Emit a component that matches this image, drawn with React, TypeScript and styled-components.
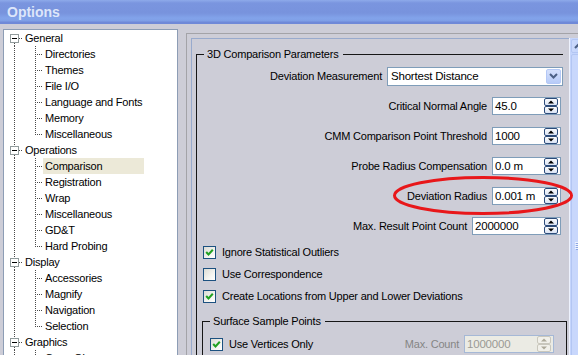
import styled, { createGlobalStyle } from "styled-components";

const GlobalStyle = createGlobalStyle`
  html, body {
    margin: 0;
    padding: 0;
  }
  body {
    background: #cdcdd7;
    font-family: "Liberation Sans", Arial, sans-serif;
    font-size: 11px;
    letter-spacing: -0.2px;
    color: #000;
  }
`;

type TreeGroup = { title: string; items: string[] };

const tree: TreeGroup[] = [
  {
    title: "General",
    items: ["Directories", "Themes", "File I/O", "Language and Fonts", "Memory", "Miscellaneous"],
  },
  {
    title: "Operations",
    items: ["Comparison", "Registration", "Wrap", "Miscellaneous", "GD&T", "Hard Probing"],
  },
  { title: "Display", items: ["Accessories", "Magnify", "Navigation", "Selection"] },
  { title: "Graphics", items: ["Open GL"] },
];

const spinRows = [
  { label: "Critical Normal Angle", value: "45.0", width: 69 },
  { label: "CMM Comparison Point Threshold", value: "1000", width: 69 },
  { label: "Probe Radius Compensation", value: "0.0 m", width: 69 },
  { label: "Deviation Radius", value: "0.001 m", width: 69 },
  { label: "Max. Result Point Count", value: "2000000", width: 89 },
];

const checks = [
  { label: "Ignore Statistical Outliers", checked: true },
  { label: "Use Correspondence", checked: false },
  { label: "Create Locations from Upper and Lower Deviations", checked: true },
];

const DOT = "#4a4a4a";

const ParentGuide = ({ first }: { first?: boolean }) => (
  <svg width={19} height={16} shapeRendering="crispEdges">
    <g stroke={DOT} strokeDasharray="1 1">
      {!first && <line x1={10.5} y1={0} x2={10.5} y2={4} />}
      <line x1={10.5} y1={13} x2={10.5} y2={16} />
      <line x1={15} y1={8.5} x2={19} y2={8.5} />
    </g>
    <rect x={6.5} y={4.5} width={8} height={8} fill="#fff" stroke="#919b9c" />
    <line x1={8} y1={8.5} x2={13} y2={8.5} stroke="#000" />
  </svg>
);

const ChildGuide = ({ last }: { last?: boolean }) => (
  <svg width={39} height={16} shapeRendering="crispEdges">
    <g stroke={DOT} strokeDasharray="1 1">
      <line x1={10.5} y1={0} x2={10.5} y2={16} />
      <line x1={31.5} y1={0} x2={31.5} y2={last ? 9 : 16} />
      <line x1={33} y1={8.5} x2={39} y2={8.5} />
    </g>
  </svg>
);

const SpinArrows = ({ disabled }: { disabled?: boolean }) => {
  const edge = disabled ? "#c9c7bd" : "#2c4b7a";
  const arrow = disabled ? "#aca899" : "#000";
  const fill = disabled ? "#f1f0ea" : "url(#spinFill)";
  return (
    <svg width={15} height={16}>
      <defs>
        <linearGradient id="spinFill" x1="0" y1="0" x2="0" y2="1">
          <stop offset="0" stopColor="#ffffff" />
          <stop offset="1" stopColor="#d8e2f4" />
        </linearGradient>
      </defs>
      <rect x={0.5} y={0.5} width={13} height={7} rx={1.5} fill={fill} stroke={edge} />
      <rect x={0.5} y={8.5} width={13} height={7} rx={1.5} fill={fill} stroke={edge} />
      <polygon points="4,5.5 10,5.5 7,2.5" fill={arrow} />
      <polygon points="4,10.5 10,10.5 7,13.5" fill={arrow} />
    </svg>
  );
};

const Chevron = () => (
  <svg width={9} height={6}>
    <polyline points="1,1 4.5,4.5 8,1" fill="none" stroke="#4d6185" strokeWidth={2} />
  </svg>
);

const CheckMark = () => (
  <svg width={9} height={9}>
    <polyline points="1.2,4 3.5,6.5 7.8,1.8" fill="none" stroke="#21a121" strokeWidth={2} />
  </svg>
);

const Grip = () => (
  <svg width={8} height={8} shapeRendering="crispEdges">
    {[0, 2, 4, 6].map((y) => (
      <g key={y}>
        <line x1={0} y1={y + 0.5} x2={7} y2={y + 0.5} stroke="#eef3fe" />
        <line x1={1} y1={y + 1.5} x2={8} y2={y + 1.5} stroke="#8ca6e4" />
      </g>
    ))}
  </svg>
);

const Check = ({ checked, label }: { checked: boolean; label: string }) => (
  <CheckRow>
    <CheckBox>{checked && <CheckMark />}</CheckBox>
    <span>{label}</span>
  </CheckRow>
);

const SpinField = ({
  value,
  width,
  disabled,
  $gapRight = 2,
}: {
  value: string;
  width: number;
  disabled?: boolean;
  $gapRight?: number;
}) => (
  <Spin $width={width} $disabled={disabled} $gapRight={$gapRight}>
    <SpinText $disabled={disabled}>{value}</SpinText>
    <SpinArrows disabled={disabled} />
  </Spin>
);

export default function App() {
  return (
    <Window>
      <GlobalStyle />
      <TitleBar>Options</TitleBar>
      <Body>
        <Tree>
          {tree.map((group, gi) => (
            <div key={group.title}>
              <TreeRow>
                <ParentGuide first={gi === 0} />
                <NodeLabel>{group.title}</NodeLabel>
              </TreeRow>
              {group.items.map((item, i) => (
                <TreeRow key={item + i}>
                  <ChildGuide last={i === group.items.length - 1} />
                  <NodeLabel $selected={item === "Comparison"}>{item}</NodeLabel>
                </TreeRow>
              ))}
            </div>
          ))}
        </Tree>

        <Frame>
          <PaneContent>
            <Group>
              <Legend $inset={2}>3D Comparison Parameters</Legend>
              <FieldRow>
                <span>Deviation Measurement</span>
                <Combo>
                  <ComboText>Shortest Distance</ComboText>
                  <DropButton>
                    <Chevron />
                  </DropButton>
                </Combo>
              </FieldRow>
              {spinRows.map((row) => (
                <FieldRow key={row.label}>
                  <span>{row.label}</span>
                  <SpinField value={row.value} width={row.width} />
                </FieldRow>
              ))}
              {checks.map((c) => (
                <Check key={c.label} checked={c.checked} label={c.label} />
              ))}
              <Group $inner>
                <Legend $inset={1}>Surface Sample Points</Legend>
                <InnerRow>
                  <Check checked label="Use Vertices Only" />
                  <MutedLabel>Max. Count</MutedLabel>
                  <SpinField value="1000000" width={90} disabled $gapRight={0} />
                </InnerRow>
              </Group>
            </Group>
          </PaneContent>
          <ScrollBar>
            <ScrollButton>
              <svg width={9} height={6}>
                <polyline points="1,5 4.5,1.5 8,5" fill="none" stroke="#4d6185" strokeWidth={2} />
              </svg>
            </ScrollButton>
            <Thumb>
              <Grip />
            </Thumb>
          </ScrollBar>
        </Frame>
      </Body>

      <Highlight width={183} height={42}>
        <ellipse cx={91} cy={20.5} rx={88.5} ry={18} fill="none" stroke="#e8171a" strokeWidth={3} />
      </Highlight>
    </Window>
  );
}

const Window = styled.div`
  position: relative;
  width: 578px;
  height: 355px;
  overflow: hidden;
  background: #cdcdd7;
  display: flex;
  flex-direction: column;
`;

const TitleBar = styled.div`
  flex: none;
  height: 24px;
  line-height: 24px;
  padding-left: 7px;
  font-size: 14px;
  font-weight: bold;
  letter-spacing: 0;
  color: #dde6fa;
  background: linear-gradient(
    to bottom,
    #8eaaea 0px,
    #7a95df 3px,
    #7893dd 13px,
    #82a3ea 18px,
    #7f9fe6 21px,
    #6f89d8 22px,
    #6f89d8 24px
  );
`;

const Body = styled.div`
  flex: 1;
  display: flex;
  align-items: flex-start;
  padding: 5px 0 0 3px;
  min-height: 0;
`;

const Tree = styled.div`
  flex: none;
  width: 175px;
  height: 400px;
  box-sizing: border-box;
  background: #fff;
  border: 1px solid #8d9db5;
`;

const TreeRow = styled.div`
  display: flex;
  align-items: center;
  height: 16px;

  svg {
    flex: none;
    display: block;
  }
`;

const NodeLabel = styled.span<{ $selected?: boolean }>`
  box-sizing: border-box;
  height: 16px;
  line-height: 16px;
  padding: 0 2px;
  white-space: nowrap;
  background: ${(p) => (p.$selected ? "#ece9d8" : "transparent")};
  width: ${(p) => (p.$selected ? "101px" : "auto")};
`;

const Frame = styled.div`
  flex: none;
  display: flex;
  margin: 4px 0 0 8px;
  padding: 4px 0 0 4px;
  height: 400px;
  border-left: 1px solid #a3a3a8;
  border-top: 1px solid #a3a3a8;
`;

const PaneContent = styled.div`
  flex: none;
  width: 378px;
  box-sizing: border-box;
  padding: 0 6px 0 4px;
  border-left: 1px solid #98aacd;
  border-top: 1px solid #98aacd;
`;

const Group = styled.fieldset<{ $inner?: boolean }>`
  min-width: 0;
  margin: ${(p) => (p.$inner ? "8px -4px 0 0" : "9px 0 0 0")};
  padding: ${(p) => (p.$inner ? "0 12px 0 6px" : "0 0 0 5px")};
  border: 1px solid #161616;
  border-bottom: none;
  border-right: ${(p) => (p.$inner ? "1px solid #161616" : "none")};
`;

const Legend = styled.legend<{ $inset: number }>`
  margin-left: ${(p) => p.$inset}px;
  padding: 0 4px 0 3px;
  line-height: 13px;
`;

const FieldRow = styled.div`
  height: 30px;
  display: flex;
  align-items: center;
  justify-content: flex-end;
  gap: 5px;
  white-space: nowrap;
`;

const Combo = styled.div`
  width: 176px;
  height: 19px;
  box-sizing: border-box;
  display: flex;
  align-items: center;
  padding: 0 1px 0 3px;
  background: #fff;
  border: 1px solid #7f9db9;
`;

const ComboText = styled.span`
  flex: 1;
  font-size: 11.5px;
`;

const DropButton = styled.span`
  width: 15px;
  height: 15px;
  box-sizing: border-box;
  display: flex;
  align-items: center;
  justify-content: center;
  border: 1px solid #b4c8f6;
  border-radius: 2px;
  background: linear-gradient(#d6e1fc, #b7cbf8);
`;

const Spin = styled.div<{ $width: number; $disabled?: boolean; $gapRight: number }>`
  width: ${(p) => p.$width}px;
  height: 18px;
  box-sizing: border-box;
  display: flex;
  align-items: center;
  margin-right: ${(p) => p.$gapRight}px;
  padding: 0 1px 0 2px;
  background: ${(p) => (p.$disabled ? "#ebebe4" : "#fff")};
  border: 1px solid ${(p) => (p.$disabled ? "#a5b8d6" : "#7f9db9")};

  svg {
    flex: none;
    display: block;
  }
`;

const SpinText = styled.span<{ $disabled?: boolean }>`
  flex: 1;
  font-size: 11.5px;
  color: ${(p) => (p.$disabled ? "#9a9a94" : "#000")};
`;

const CheckRow = styled.div`
  height: 22px;
  display: flex;
  align-items: center;
  gap: 6px;
  padding-left: 1px;
  white-space: nowrap;
`;

const CheckBox = styled.span`
  flex: none;
  width: 13px;
  height: 13px;
  box-sizing: border-box;
  display: flex;
  align-items: center;
  justify-content: center;
  border: 1px solid #1c5180;
  background: linear-gradient(135deg, #dcdcd5 0%, #f4f4f0 60%, #ffffff 100%);

  svg {
    display: block;
  }
`;

const InnerRow = styled.div`
  height: 22px;
  margin-top: 5px;
  display: flex;
  align-items: center;
  gap: 5px;
`;

const MutedLabel = styled.span`
  margin-left: auto;
  color: #858585;
  white-space: nowrap;
`;

const ScrollBar = styled.div`
  flex: none;
  width: 17px;
  display: flex;
  flex-direction: column;
  background: #c5d5fc;
  border-left: 1px solid #eef2fd;
`;

const ScrollButton = styled.div`
  height: 16px;
  margin: 1px 1px 0;
  display: flex;
  align-items: center;
  justify-content: center;
  border: 1px solid #b3c6f3;
  border-radius: 2px;
  background: linear-gradient(90deg, #cbd9fc, #bccff9);
`;

const Thumb = styled.div`
  height: 498px;
  margin: 1px 1px 0;
  display: flex;
  align-items: center;
  justify-content: center;
  border: 1px solid #b3c6f3;
  border-radius: 2px;
  background: #c8d7fc;
`;

const Highlight = styled.svg`
  position: absolute;
  left: 392px;
  top: 175px;
  pointer-events: none;
`;
